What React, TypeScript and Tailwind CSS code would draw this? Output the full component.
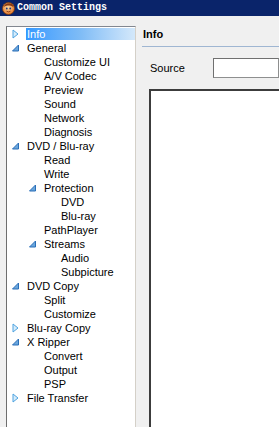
type Node = {
  label: string;
  level: number;
  arrow?: "open" | "closed";
  selected?: boolean;
};

const nodes: Node[] = [
  { label: "Info", level: 0, arrow: "closed", selected: true },
  { label: "General", level: 0, arrow: "open" },
  { label: "Customize UI", level: 1 },
  { label: "A/V Codec", level: 1 },
  { label: "Preview", level: 1 },
  { label: "Sound", level: 1 },
  { label: "Network", level: 1 },
  { label: "Diagnosis", level: 1 },
  { label: "DVD / Blu-ray", level: 0, arrow: "open" },
  { label: "Read", level: 1 },
  { label: "Write", level: 1 },
  { label: "Protection", level: 1, arrow: "open" },
  { label: "DVD", level: 2 },
  { label: "Blu-ray", level: 2 },
  { label: "PathPlayer", level: 1 },
  { label: "Streams", level: 1, arrow: "open" },
  { label: "Audio", level: 2 },
  { label: "Subpicture", level: 2 },
  { label: "DVD Copy", level: 0, arrow: "open" },
  { label: "Split", level: 1 },
  { label: "Customize", level: 1 },
  { label: "Blu-ray Copy", level: 0, arrow: "closed" },
  { label: "X Ripper", level: 0, arrow: "open" },
  { label: "Convert", level: 1 },
  { label: "Output", level: 1 },
  { label: "PSP", level: 1 },
  { label: "File Transfer", level: 0, arrow: "closed" },
];

const indent = ["pl-[5px]", "pl-[22px]", "pl-[39px]"];

function Arrow({ kind }: { kind?: "open" | "closed" }) {
  if (!kind) return <span className="w-[7px] shrink-0" />;
  if (kind === "closed") {
    return (
      <svg width="7" height="10" viewBox="0 0 7 10" className="shrink-0">
        <path d="M1 1 L6 5 L1 9 Z" fill="#d6ecfb" stroke="#4fa3e0" strokeWidth="1" strokeLinejoin="round" />
      </svg>
    );
  }
  return (
    <svg width="7" height="8" viewBox="0 0 7 8" className="shrink-0">
      <path d="M6.5 1 L6.5 7 L0.5 7 Z" fill="#6aa6dc" stroke="#2a6fb8" strokeWidth="1" strokeLinejoin="round" />
    </svg>
  );
}

function AppIcon() {
  return (
    <svg width="13" height="13" viewBox="0 0 13 13">
      <defs>
        <radialGradient id="face" cx="0.45" cy="0.4" r="0.6">
          <stop offset="0" stopColor="#ffd9a0" />
          <stop offset="1" stopColor="#e0762a" />
        </radialGradient>
      </defs>
      <circle cx="6.5" cy="6.5" r="6" fill="url(#face)" stroke="#7a3a10" strokeWidth="0.8" />
      <path d="M1.5 5 Q3 1 7 1.2 Q11 1.5 11.5 5 Q9 3 6.5 3.5 Q4 3 1.5 5 Z" fill="#8a3b12" />
      <circle cx="4.8" cy="6.5" r="0.9" fill="#1a3a80" />
      <circle cx="8.2" cy="6.5" r="0.9" fill="#1a3a80" />
      <path d="M4.5 9.2 Q6.5 10.6 8.5 9.2" fill="none" stroke="#7a2a0a" strokeWidth="0.8" />
    </svg>
  );
}

export default function App() {
  return (
    <div className="w-[279px] h-[427px] overflow-hidden bg-[#f0f0f0] flex flex-col font-['Liberation_Sans_Narrow','Arial_Narrow','Liberation_Sans',sans-serif] text-[11px] text-black">
      <div className="h-[16px] shrink-0 bg-[#0a246a] flex items-center pl-[2px] gap-[2px]">
        <AppIcon />
        <span className="font-['Liberation_Mono','Courier_New',monospace] font-bold text-[10px] leading-none text-white">
          Common Settings
        </span>
      </div>

      <div className="flex flex-1 min-h-0 pt-[10px] pl-[6px]">
        <div className="w-[130px] shrink-0 bg-white border-t border-l border-r border-t-[#828790] border-l-[#6e6e6e] border-r-[#d4d0c8]">
          {nodes.map((n) => (
            <div key={n.label} className={`h-[14px] flex items-center gap-[7px] ${indent[n.level]}`}>
              <Arrow kind={n.arrow} />
              {n.selected ? (
                <span className="flex-1 h-[12px] flex items-center pl-[1px] text-white bg-gradient-to-r from-[#3399ff] via-[#7fbcf6] to-[#d4e8fa]">
                  {n.label}
                </span>
              ) : (
                <span className="pl-[1px] whitespace-nowrap">{n.label}</span>
              )}
            </div>
          ))}
        </div>

        <div className="flex-1 min-w-0 flex flex-col pl-[6px]">
          <div className="h-[21px] shrink-0 flex items-center pl-[1px] pb-[4px] border-b border-[#9fb6d2] font-bold">
            Info
          </div>
          <div className="mt-[11px] h-[20px] shrink-0 flex items-center pl-[8px]">
            <span className="w-[63px] shrink-0">Source</span>
            <div className="flex-1 h-[20px] bg-white border border-[#8e8f8f] border-t-[#707070] border-l-[#707070]" />
          </div>
          <div className="mt-[11px] ml-[7px] flex-1 bg-white border-t-2 border-l-2 border-t-[#3c3c3c] border-l-[#3c3c3c]" />
        </div>
      </div>
    </div>
  );
}
